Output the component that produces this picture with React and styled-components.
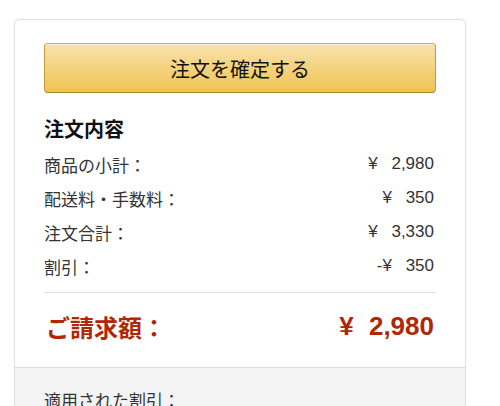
import styled, { createGlobalStyle } from "styled-components";

const GlobalStyle = createGlobalStyle`
  html, body {
    margin: 0;
    padding: 0;
    background: #fff;
  }
  body {
    font-family: "Liberation Sans", "Noto Sans CJK JP", sans-serif;
    color: #111;
  }
`;

const Page = styled.div`
  padding: 19px 34px 0 14px;
  height: 406px;
  box-sizing: border-box;
  overflow: hidden;
`;

const Card = styled.div`
  border: 1px solid #dddddd;
  border-radius: 5px;
  background: #fff;
  width: 452px;
  box-sizing: border-box;
`;

const Main = styled.div`
  padding: 23px 29px 0 29px;
`;

const PlaceButton = styled.button`
  display: block;
  width: 100%;
  height: 50px;
  border: 1px solid;
  border-color: #cfae55 #bf9b3c #a98730;
  border-radius: 4px;
  background: linear-gradient(to bottom, #f8e3ad, #f0c350);
  box-shadow: inset 0 1px 0 rgba(255, 255, 255, 0.5);
  font-family: "Liberation Sans", "Noto Sans CJK JP", sans-serif;
  font-size: 20px;
  color: #111;
  cursor: pointer;
  padding: 0;
`;

const Heading = styled.h3`
  margin: 26px 0 6px 0;
  font-size: 20px;
  font-weight: bold;
  line-height: 22px;
  color: #111;
`;

const Row = styled.div`
  display: flex;
  justify-content: space-between;
  align-items: center;
  height: 34px;
  font-size: 17px;
  color: #333;
`;

const Amount = styled.span`
  word-spacing: ${(p) => p.$gap || 9}px;
  padding-right: 2px;
`;

const Divider = styled.hr`
  border: none;
  border-top: 1px solid #e3e3e3;
  margin: 9px 0 0 0;
`;

const TotalRow = styled.div`
  display: flex;
  justify-content: space-between;
  align-items: center;
  height: 66px;
  font-size: 24px;
  font-weight: bold;
  color: #b12704;
  padding-bottom: 8px;
`;

const TotalLabel = styled.span`
  padding-left: 2px;
`;

const TotalAmount = styled(Amount)`
  font-size: 26px;
`;

const Footer = styled.div`
  background: #f3f3f3;
  border-top: 1px solid #dddddd;
  padding: 19px 29px 40px;
  font-size: 17px;
  color: #333;
  border-radius: 0 0 5px 5px;
`;

const rows = [
  ["商品の小計：", "¥ 2,980"],
  ["配送料・手数料：", "¥ 350"],
  ["注文合計：", "¥ 3,330"],
  ["割引：", "-¥ 350"],
];

export default function App() {
  return (
    <>
      <GlobalStyle />
      <Page>
        <Card>
          <Main>
            <PlaceButton>注文を確定する</PlaceButton>
            <Heading>注文内容</Heading>
            {rows.map(([label, value]) => (
              <Row key={label}>
                <span>{label}</span>
                <Amount>{value}</Amount>
              </Row>
            ))}
            <Divider />
            <TotalRow>
              <TotalLabel>ご請求額：</TotalLabel>
              <TotalAmount $gap={8}>¥ 2,980</TotalAmount>
            </TotalRow>
          </Main>
          <Footer>適用された割引：</Footer>
        </Card>
      </Page>
    </>
  );
}
